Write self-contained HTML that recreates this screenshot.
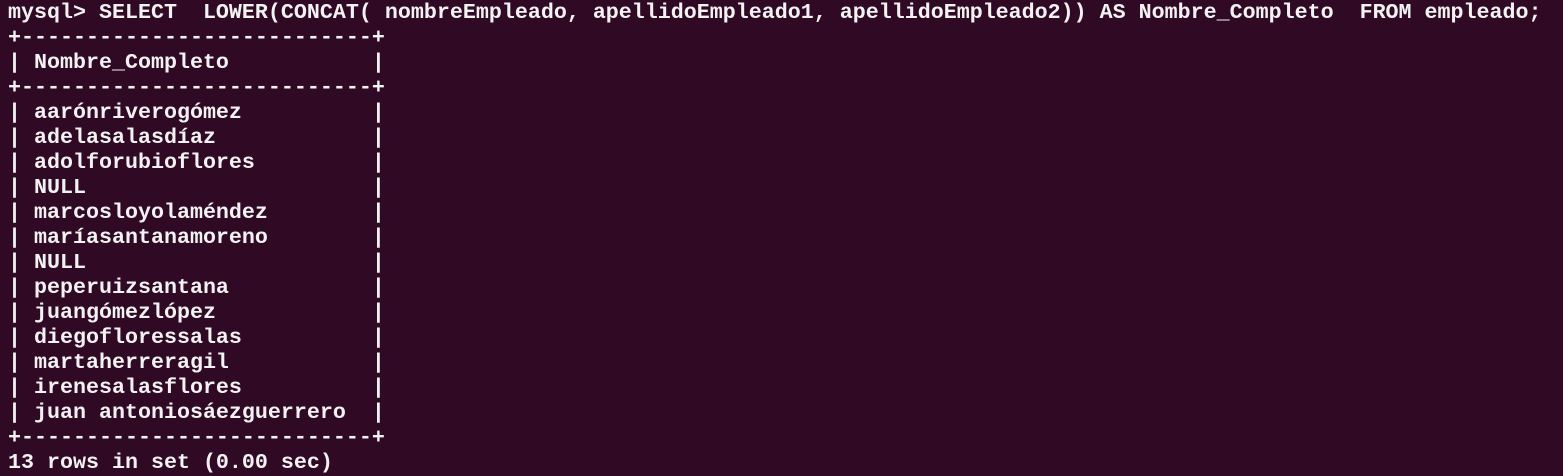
<!DOCTYPE html>
<html><head><meta charset="utf-8"><style>
html,body{margin:0;padding:0;background:#300a24;width:1563px;height:476px;overflow:hidden}
pre{margin:0;padding:0 0 0 8px;font-family:"Liberation Mono",monospace;font-size:21.67px;line-height:25px;color:#f2f2f2;font-weight:bold;white-space:pre}
</style></head><body><pre>mysql&gt; SELECT  LOWER(CONCAT( nombreEmpleado, apellidoEmpleado1, apellidoEmpleado2)) AS Nombre_Completo  FROM empleado;
+---------------------------+
| Nombre_Completo           |
+---------------------------+
| aarónriverogómez          |
| adelasalasdíaz            |
| adolforubioflores         |
| NULL                      |
| marcosloyolaméndez        |
| maríasantanamoreno        |
| NULL                      |
| peperuizsantana           |
| juangómezlópez            |
| diegofloressalas          |
| martaherreragil           |
| irenesalasflores          |
| juan antoniosáezguerrero  |
+---------------------------+
13 rows in set (0.00 sec)
</pre></body></html>
